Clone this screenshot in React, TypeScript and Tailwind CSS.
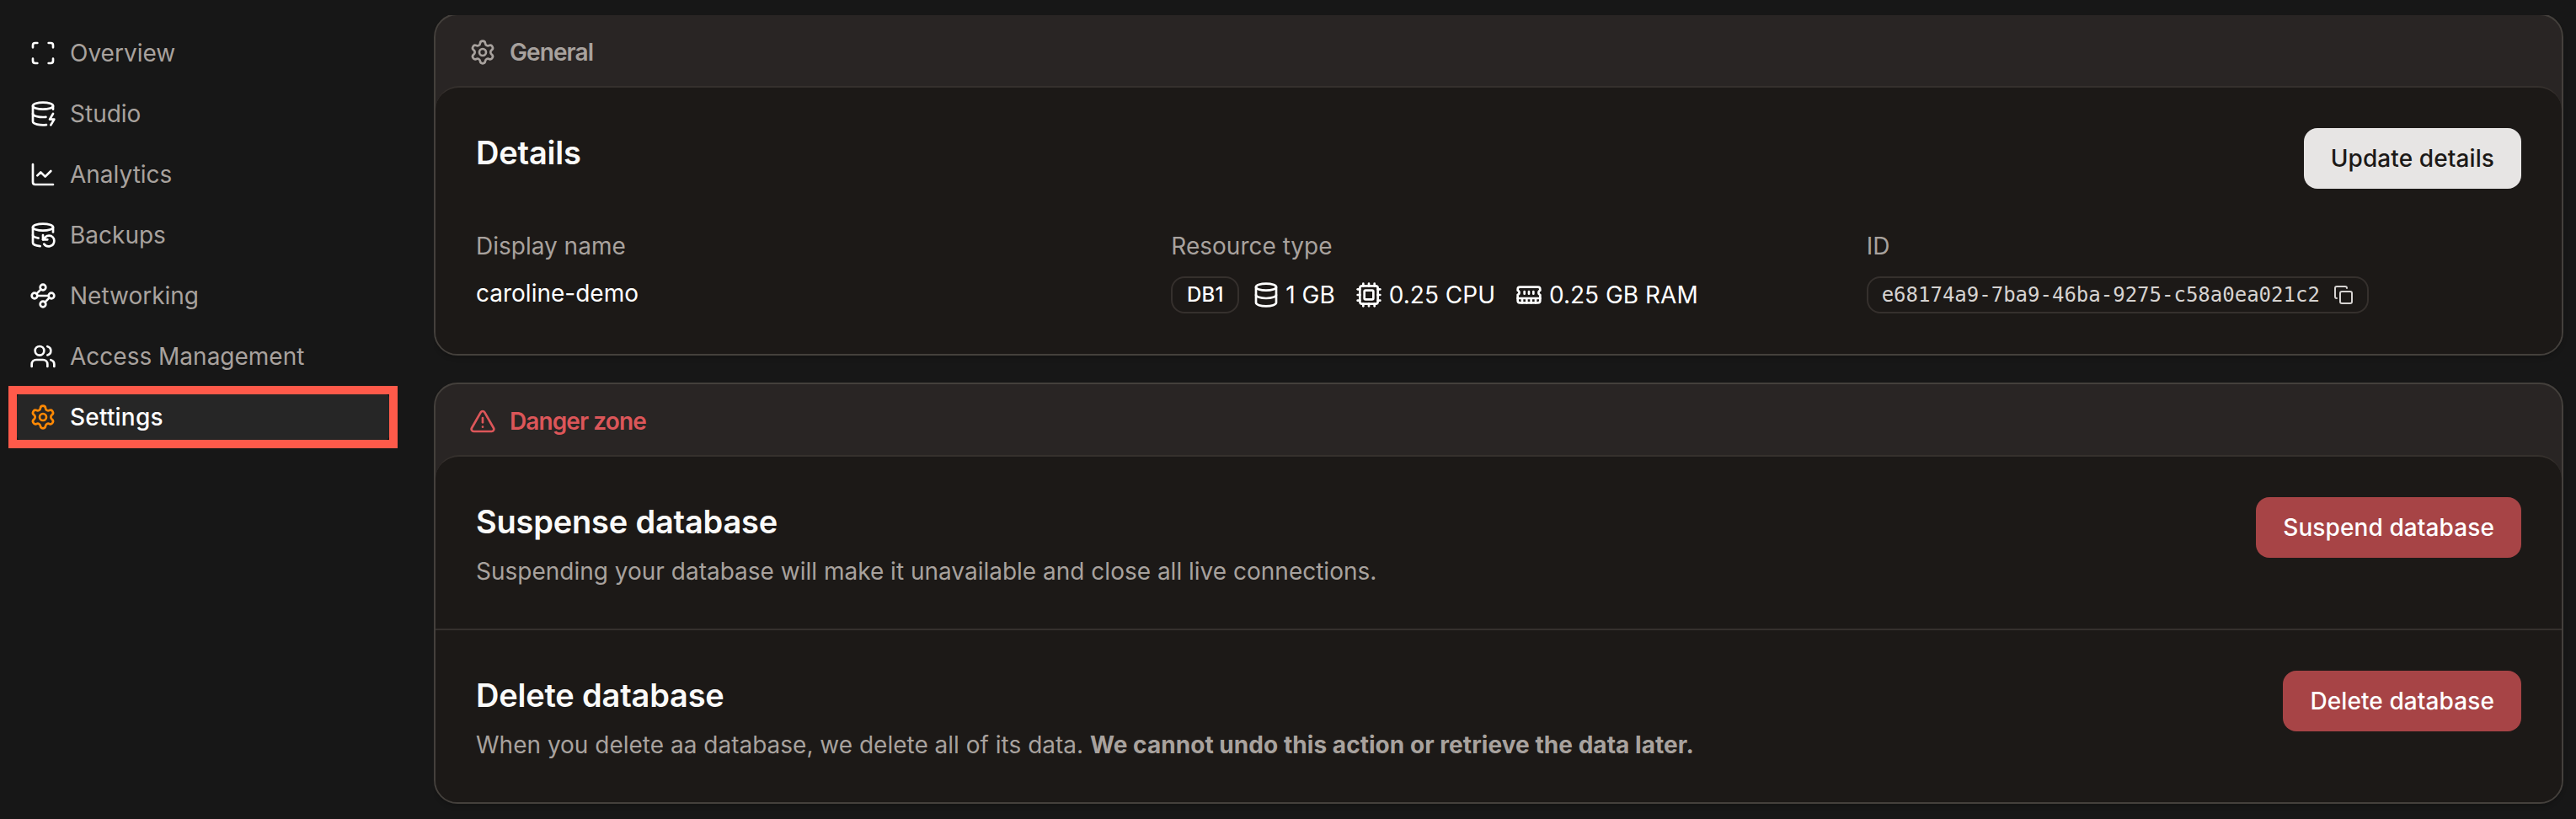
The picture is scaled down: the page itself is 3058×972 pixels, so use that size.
import type { ReactNode } from "react";
import {
  ChartLine,
  Copy,
  Cpu,
  Database,
  DatabaseBackup,
  DatabaseZap,
  Scan,
  Settings,
  TriangleAlert,
  Users,
  Waypoints,
} from "lucide-react";
import clsx from "clsx";

const navItems = [
  { label: "Overview", icon: Scan },
  { label: "Studio", icon: DatabaseZap },
  { label: "Analytics", icon: ChartLine },
  { label: "Backups", icon: DatabaseBackup },
  { label: "Networking", icon: Waypoints },
  { label: "Access Management", icon: Users },
  { label: "Settings", icon: Settings, active: true },
];

const MemoryIcon = ({ className }: { className?: string }) => (
  <svg
    width={32}
    height={32}
    viewBox="0 0 24 24"
    fill="none"
    stroke="currentColor"
    strokeWidth={2}
    strokeLinecap="round"
    strokeLinejoin="round"
    className={className}
  >
    <path d="M6 19v-3M10 19v-3M14 19v-3M18 19v-3" />
    <path d="M8 11V9M12 11V9M16 11V9" />
    <path d="M2 15h20" />
    <path d="M2 7a2 2 0 0 1 2-2h16a2 2 0 0 1 2 2v1.1a2 2 0 0 0 0 3.837V17a2 2 0 0 1-2 2H4a2 2 0 0 1-2-2v-5.1a2 2 0 0 0 0-3.837Z" />
  </svg>
);

const Sidebar = () => (
  <nav className="w-[515px] shrink-0 pt-[35px] pl-[19px] pr-[52px] flex flex-col gap-4">
    {navItems.map(({ label, icon: Icon, active }) => (
      <a
        key={label}
        href="#"
        className={clsx(
          "relative h-14 px-4 flex items-center gap-4 rounded-lg",
          active
            ? "bg-[#262626] text-white font-medium tracking-[0.2px]"
            : "text-[#a8a29e]"
        )}
      >
        <Icon
          size={32}
          className={active ? "text-[#ff8904]" : "text-white"}
        />
        <span>{label}</span>
        {active && (
          <div className="absolute -top-[9px] -bottom-[9px] -left-[9px] right-[-9px] border-[10px] border-[#ff5a4a]" />
        )}
      </a>
    ))}
  </nav>
);

type CardProps = {
  icon: ReactNode;
  title: string;
  danger?: boolean;
  children: ReactNode;
};

const Card = ({ icon, title, danger, children }: CardProps) => (
  <section className="border-2 border-[#44403c] rounded-[28px] bg-[#292524] overflow-hidden shadow-md">
    <div
      className={clsx(
        "h-[84px] pt-7 px-10 flex items-start gap-4 font-semibold leading-8 tracking-[-0.9px]",
        danger ? "text-[#dc5659]" : "text-[#a8a29e]"
      )}
    >
      {icon}
      <h3>{title}</h3>
    </div>
    <div className="border-t-2 border-[#35302d] rounded-t-[28px] bg-[#1c1917]">
      {children}
    </div>
  </section>
);

const Heading = ({ children }: { children: ReactNode }) => (
  <h2 className="text-[38px] leading-[58px] font-semibold tracking-[-0.2px] text-[#fafaf9]">
    {children}
  </h2>
);

const Button = ({ danger, children }: { danger?: boolean; children: ReactNode }) => (
  <button
    className={clsx(
      "h-[72px] px-8 rounded-2xl font-medium tracking-[0.1px] shrink-0",
      danger ? "bg-[#a74446] text-white" : "bg-[#e7e5e4] text-[#1c1917]"
    )}
  >
    {children}
  </button>
);

const App = () => {
  return (
    <div className="h-[972px] flex overflow-hidden bg-[#171717] text-[28px] leading-10 font-['Inter',sans-serif]">
      <Sidebar />
      <main className="flex-1 mt-[18px] pr-[15px] overflow-hidden">
        <div className="-mt-[2px] flex flex-col gap-8">
          <Card icon={<Settings size={32} />} title="General">
            <div className="h-[316px] p-12">
              <div className="h-[72px] flex items-start justify-between">
                <Heading>Details</Heading>
                <Button>Update details</Button>
              </div>
              <div className="mt-12 grid grid-cols-3 gap-12">
                <div>
                  <div className="text-[#a8a29e]">Display name</div>
                  <div className="mt-4 text-white">caroline-demo</div>
                </div>
                <div>
                  <div className="text-[#a8a29e]">Resource type</div>
                  <div className="mt-4 flex items-center text-white">
                    <span className="w-[81px] h-[44px] flex items-center justify-center border-2 border-[#35302d] rounded-2xl text-2xl font-medium tracking-[0.2px]">
                      DB1
                    </span>
                    <Database size={32} className="ml-4" />
                    <span className="ml-[7px]">1 GB</span>
                    <Cpu size={32} className="ml-6" />
                    <span className="ml-2">0.25 CPU</span>
                    <MemoryIcon className="ml-6" />
                    <span className="ml-2">0.25 GB RAM</span>
                  </div>
                </div>
                <div>
                  <div className="text-[#a8a29e]">ID</div>
                  <div className="mt-4 w-fit h-[44px] px-4 flex items-center gap-4 border-2 border-[#35302d] rounded-2xl text-[#d6d3d1]">
                    <span className="text-2xl font-['DejaVu_Sans_Mono',monospace]">
                      e68174a9-7ba9-46ba-9275-c58a0ea021c2
                    </span>
                    <Copy size={24} />
                  </div>
                </div>
              </div>
            </div>
          </Card>

          <Card danger icon={<TriangleAlert size={32} />} title="Danger zone">
            <div className="h-[204px] p-12 flex items-start justify-between">
              <div>
                <Heading>Suspense database</Heading>
                <p className="mt-[10px] text-[#a8a29e]">
                  Suspending your database will make it unavailable and close
                  all live connections.
                </p>
              </div>
              <Button danger>Suspend database</Button>
            </div>
            <div className="h-[206px] p-12 flex items-start justify-between border-t-2 border-[#35302d]">
              <div>
                <Heading>Delete database</Heading>
                <p className="mt-[10px] text-[#a8a29e]">
                  When you delete aa database, we delete all of its data.{" "}
                  <strong className="tracking-[0.05px]">
                    We cannot undo this action or retrieve the data later.
                  </strong>
                </p>
              </div>
              <Button danger>Delete database</Button>
            </div>
          </Card>
        </div>
      </main>
    </div>
  );
};

export default App;
